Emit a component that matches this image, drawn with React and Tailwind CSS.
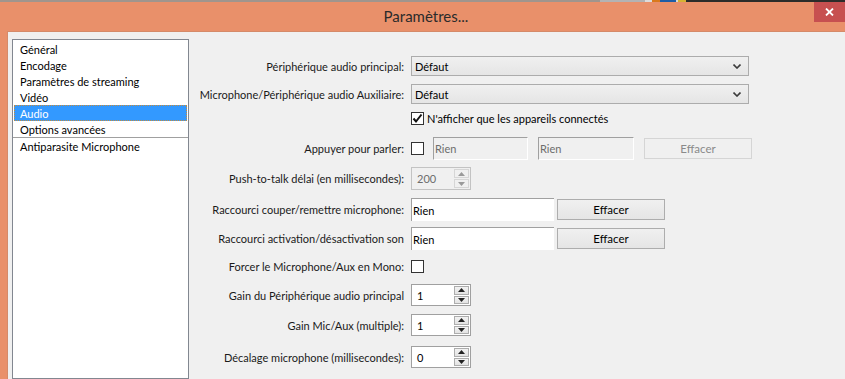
import React from 'react';

const FONT = 'font-["Lato",sans-serif]';

function Chevron() {
  return (
    <svg width="8" height="5" viewBox="0 0 8 5" className="shrink-0">
      <path d="M0.5 0.5 L4 4 L7.5 0.5" fill="none" stroke="#3c3c3c" strokeWidth="1.6" />
    </svg>
  );
}

function Combo({ value }) {
  return (
    <div className="w-[338px] h-[20px] border border-[#acacac] bg-gradient-to-b from-[#f0f0f0] to-[#e5e5e5] flex items-center justify-between pl-[3px] pr-[7px]">
      <span className="text-black">{value}</span>
      <Chevron />
    </div>
  );
}

function Check({ checked }) {
  return (
    <div className="w-[13px] h-[13px] border border-[#333333] bg-white flex items-center justify-center shrink-0">
      {checked && (
        <svg width="11" height="11" viewBox="0 0 11 11">
          <path d="M1.5 5.5 L4 8.5 L9.5 1.5" fill="none" stroke="#111" strokeWidth="2" />
        </svg>
      )}
    </div>
  );
}

function Label({ children }) {
  return <div className="w-[216px] text-right pr-[1px] whitespace-nowrap text-[#1a1a1a]">{children}</div>;
}

function Arrow({ up, color }) {
  return (
    <svg width="7" height="4" viewBox="0 0 7 4">
      {up ? <path d="M0 4 L3.5 0 L7 4 Z" fill={color} /> : <path d="M0 0 L7 0 L3.5 4 Z" fill={color} />}
    </svg>
  );
}

function Spin({ value, disabled, w = 'w-[60px]', h = 'h-[22px]' }) {
  const arrow = disabled ? '#9a9a9a' : '#222';
  return (
    <div
      className={`${w} ${h} border flex ${
        disabled ? 'border-[#c3c3c3] bg-[#f0f0f0] text-[#6d6d6d]' : 'border-[#a0a0a0] bg-white text-black'
      }`}
    >
      <div className="flex-1 pl-[5px] flex items-center">{value}</div>
      <div className="w-[17px] flex flex-col p-[1px] gap-[1px]">
        <div
          className={`flex-1 flex items-center justify-center border ${
            disabled ? 'border-[#d6d6d6] bg-[#f0f0f0]' : 'border-[#adadad] bg-gradient-to-b from-[#f2f2f2] to-[#e3e3e3]'
          }`}
        >
          <Arrow up color={arrow} />
        </div>
        <div
          className={`flex-1 flex items-center justify-center border ${
            disabled ? 'border-[#d6d6d6] bg-[#f0f0f0]' : 'border-[#adadad] bg-gradient-to-b from-[#f2f2f2] to-[#e3e3e3]'
          }`}
        >
          <Arrow color={arrow} />
        </div>
      </div>
    </div>
  );
}

function Btn({ disabled }) {
  return (
    <div
      className={`w-[108px] h-[21px] border flex items-center justify-center text-[11.5px] ${
        disabled
          ? 'border-[#d5d5d5] bg-[#f0f0f0] text-[#8a8a8a]'
          : 'border-[#adadad] bg-gradient-to-b from-[#f0f0f0] to-[#e5e5e5] text-black'
      }`}
    >
      Effacer
    </div>
  );
}

const items = [
  'Général',
  'Encodage',
  'Paramètres de streaming',
  'Vidéo',
  'Audio',
  'Options avancées',
];

export default function App() {
  return (
    <div className={`w-[845px] h-[379px] overflow-hidden bg-[#e9906a] flex flex-col text-[11px] leading-none ${FONT}`}>
      {/* desktop sliver behind the window */}
      <div className="h-[2px] flex shrink-0">
        <div className="w-[600px] bg-[#a0958d]" />
        <div className="w-[45px] bg-[#b3b3b3]" />
        <div className="w-[7px] bg-[#dcdcdc]" />
        <div className="w-[8px] bg-[#d9791e]" />
        <div className="w-[16px] bg-[#1d5da6]" />
        <div className="w-[2px] bg-[#d8d8d8]" />
        <div className="w-[8px] bg-[#d5b233]" />
        <div className="flex-1 bg-[#2c2c2a]" />
      </div>

      {/* title bar */}
      <div className="h-[29px] flex shrink-0">
        <div className="w-[38px]" />
        <div className="flex-1 flex items-center justify-center pb-[1px] text-[15px] text-[#2b2b2b]">Paramètres...</div>
        <div className="w-[31px] h-[20px] bg-[#c75050] flex items-center justify-center">
          <svg width="9" height="8" viewBox="0 0 9 8">
            <path d="M1 0.5 L8 7.5 M8 0.5 L1 7.5" stroke="white" strokeWidth="1.8" />
          </svg>
        </div>
      </div>

      {/* window body */}
      <div className="flex-1 ml-[7px] bg-[#f0f0f0] border-t border-l border-[#d58a69] flex min-h-0">
        {/* category list */}
        <div className="ml-[4px] mt-[7px] w-[177px] border border-[#828790] bg-white pt-[1px] px-[1px] shrink-0">
          {items.map((it) => (
            <div
              key={it}
              className={`h-[16px] flex items-center pl-[6px] whitespace-nowrap ${
                it === 'Audio' ? 'bg-[#3399ff] text-white outline-1 outline-dotted outline-[#c58b3c] -outline-offset-1' : 'text-black'
              }`}
            >
              {it}
            </div>
          ))}
          <div className="h-[1px] bg-[#a0a0a0] mx-[-1px]" />
          <div className="h-[16px] flex items-center pl-[6px] whitespace-nowrap text-black">Antiparasite Microphone</div>
        </div>

        {/* audio settings */}
        <div className="flex flex-col pt-[24px]">
          <div className="flex items-center gap-[6px] h-[20px]">
            <Label>Périphérique audio principal:</Label>
            <Combo value="Défaut" />
          </div>
          <div className="flex items-center gap-[6px] h-[20px] mt-[8px]">
            <Label>Microphone/Périphérique audio Auxiliaire:</Label>
            <Combo value="Défaut" />
          </div>
          <div className="flex items-center gap-[6px] h-[16px] mt-[6px]">
            <div className="w-[216px]" />
            <Check checked />
            <span className="-ml-[3px] text-black">N'afficher que les appareils connectés</span>
          </div>

          <div className="flex items-center gap-[6px] h-[23px] mt-[11px]">
            <Label>Appuyer pour parler:</Label>
            <Check />
            <div className="flex items-center gap-[10px] ml-[3px]">
              <div className="w-[95px] h-[23px] border-t border-l border-t-[#a0a0a0] border-l-[#a0a0a0] border-b border-r border-b-white border-r-white pl-[1px] pt-[5px] text-[#6d6d6d]">
                Rien
              </div>
              <div className="w-[96px] h-[23px] border-t border-l border-t-[#a0a0a0] border-l-[#a0a0a0] border-b border-r border-b-white border-r-white pl-[1px] pt-[5px] text-[#6d6d6d]">
                Rien
              </div>
              <Btn disabled />
            </div>
          </div>

          <div className="flex items-center gap-[6px] h-[23px] mt-[7px]">
            <Label>Push-to-talk délai (en millisecondes):</Label>
            <Spin value="200" disabled w="w-[60px]" h="h-[23px]" />
          </div>

          <div className="flex items-center gap-[6px] h-[23px] mt-[8px]">
            <Label>Raccourci couper/remettre microphone:</Label>
            <div className="flex items-center gap-[3px]">
              <div className="w-[143px] h-[23px] bg-white border-t border-l border-[#a0a0a0] pl-[1px] flex items-center text-black">Rien</div>
              <Btn />
            </div>
          </div>

          <div className="flex items-center gap-[6px] h-[23px] mt-[6px]">
            <Label>Raccourci activation/désactivation son</Label>
            <div className="flex items-center gap-[3px]">
              <div className="w-[143px] h-[23px] bg-white border-t border-l border-[#a0a0a0] pl-[1px] flex items-center text-black">Rien</div>
              <Btn />
            </div>
          </div>

          <div className="flex items-center gap-[6px] h-[20px] mt-[6px]">
            <Label>Forcer le Microphone/Aux en Mono:</Label>
            <Check />
          </div>

          <div className="flex items-center gap-[6px] h-[22px] mt-[8px]">
            <Label>Gain du Périphérique audio principal</Label>
            <Spin value="1" />
          </div>
          <div className="flex items-center gap-[6px] h-[22px] mt-[8px]">
            <Label>Gain Mic/Aux (multiple):</Label>
            <Spin value="1" />
          </div>
          <div className="flex items-center gap-[6px] h-[22px] mt-[10px]">
            <Label>Décalage microphone (millisecondes):</Label>
            <Spin value="0" />
          </div>
        </div>
      </div>
    </div>
  );
}
